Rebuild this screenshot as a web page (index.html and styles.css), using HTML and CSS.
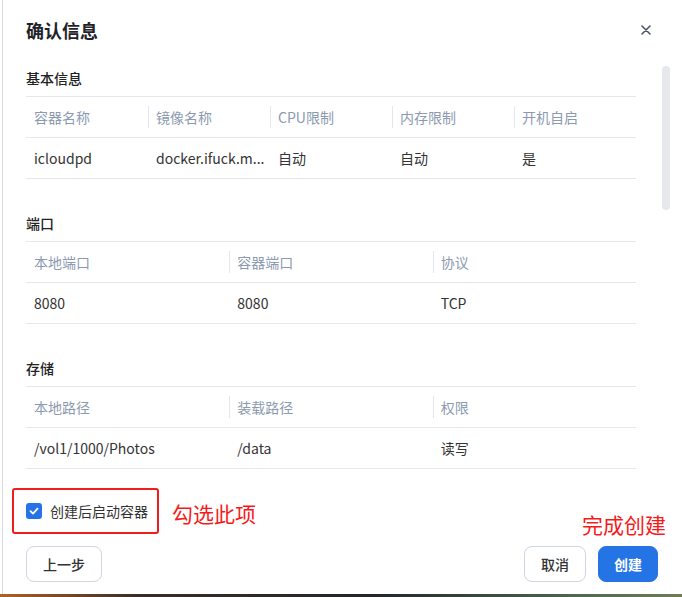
FILE: index.html
```html
<!DOCTYPE html>
<html lang="zh-CN">
<head>
    <meta charset="UTF-8">
    <meta name="viewport" content="width=device-width, initial-scale=1.0">
    <title>确认信息</title>
    <link rel="stylesheet" href="styles.css">
</head>
<body>
    <div class="dialog">
        <!-- Header -->
        <div class="dialog-header">
            <h2 class="dialog-title">确认信息</h2>
            <button class="close-btn" aria-label="关闭">
                <svg width="10" height="10" viewBox="0 0 10 10">
                    <path d="M1 1L9 9M9 1L1 9" stroke="#4b5568" stroke-width="1.6" stroke-linecap="round"/>
                </svg>
            </button>
        </div>

        <!-- Summary of the container settings -->
        <div class="dialog-body">
            <div class="scroll-thumb"></div>

            <section class="info-section">
                <h3 class="section-title">基本信息</h3>
                <table class="info-table">
                    <thead>
                        <tr>
                            <th>容器名称</th>
                            <th>镜像名称</th>
                            <th>CPU限制</th>
                            <th>内存限制</th>
                            <th>开机自启</th>
                        </tr>
                    </thead>
                    <tbody>
                        <tr>
                            <td>icloudpd</td>
                            <td>docker.ifuck.m...</td>
                            <td>自动</td>
                            <td>自动</td>
                            <td>是</td>
                        </tr>
                    </tbody>
                </table>
            </section>

            <section class="info-section">
                <h3 class="section-title">端口</h3>
                <table class="info-table">
                    <thead>
                        <tr>
                            <th>本地端口</th>
                            <th>容器端口</th>
                            <th>协议</th>
                        </tr>
                    </thead>
                    <tbody>
                        <tr>
                            <td>8080</td>
                            <td>8080</td>
                            <td>TCP</td>
                        </tr>
                    </tbody>
                </table>
            </section>

            <section class="info-section">
                <h3 class="section-title">存储</h3>
                <table class="info-table">
                    <thead>
                        <tr>
                            <th>本地路径</th>
                            <th>装载路径</th>
                            <th>权限</th>
                        </tr>
                    </thead>
                    <tbody>
                        <tr>
                            <td>/vol1/1000/Photos</td>
                            <td>/data</td>
                            <td>读写</td>
                        </tr>
                    </tbody>
                </table>
            </section>
        </div>

        <!-- Footer -->
        <div class="dialog-footer">
            <div class="footer-option">
                <label class="check-label mark-box">
                    <span class="checkbox">
                        <svg width="16" height="16" viewBox="0 0 16 16">
                            <path d="M4.5 8.2L7 10.6L11.5 5.6" fill="none" stroke="#ffffff" stroke-width="1.8" stroke-linecap="round" stroke-linejoin="round"/>
                        </svg>
                    </span>
                    创建后启动容器
                </label>
                <span class="note">勾选此项</span>
                <span class="note note-create">完成创建</span>
            </div>
            <div class="footer-actions">
                <button class="btn">上一步</button>
                <div class="actions-right">
                    <button class="btn">取消</button>
                    <button class="btn btn-primary">创建</button>
                </div>
            </div>
        </div>
    </div>
    <div class="desktop-edge"></div>
</body>
</html>
```

FILE: styles.css
```css
body {
    font-family: "Noto Sans CJK SC", "Noto Sans", sans-serif;
    margin: 0;
    padding: 0;
    background-color: #ffffff;
    color: #333333;
}

.dialog {
    margin-left: 2px;
    height: 594px;
    border-left: 1px solid #d9dbdf;
    background-color: #ffffff;
    display: flex;
    flex-direction: column;
    box-sizing: border-box;
}

/* Header */
.dialog-header {
    display: flex;
    align-items: center;
    justify-content: space-between;
    padding: 20px 28px 18px 23px;
}

.dialog-title {
    margin: 0;
    font-size: 18px;
    line-height: 20px;
    font-weight: 700;
    color: #1f2329;
}

.close-btn {
    width: 16px;
    height: 16px;
    padding: 0;
    border: none;
    background: transparent;
    display: flex;
    align-items: center;
    justify-content: center;
    cursor: pointer;
}

/* Body */
.dialog-body {
    position: relative;
    padding: 10px 46px 19px 23px;
}

.scroll-thumb {
    position: absolute;
    top: 8px;
    right: 12px;
    width: 8px;
    height: 144px;
    border-radius: 4px;
    background-color: #e6e8eb;
}

.info-section + .info-section {
    margin-top: 34px;
}

.section-title {
    margin: 0 0 8px 0;
    font-size: 14px;
    line-height: 20px;
    font-weight: 500;
    color: #222222;
}

.info-table {
    width: 100%;
    table-layout: fixed;
    border-collapse: separate;
    border-spacing: 0;
    border-top: 1px solid #e4e8ee;
}

.info-table th,
.info-table td {
    height: 40px;
    padding: 0 8px;
    border-bottom: 1px solid #e4e8ee;
    text-align: left;
    font-size: 14px;
    line-height: 20px;
    white-space: nowrap;
    overflow: hidden;
}

.info-table th {
    position: relative;
    font-weight: 400;
    color: #8c9ab0;
}

.info-table th + th::before {
    content: "";
    position: absolute;
    left: 0;
    top: 9px;
    bottom: 9px;
    width: 1px;
    background-color: #e4e8ee;
}

.info-table td {
    color: #333333;
}

/* Footer */
.dialog-footer {
    padding: 0 24px 12px 23px;
}

.footer-option {
    display: flex;
    align-items: center;
    height: 46px;
}

.check-label {
    display: inline-flex;
    align-items: center;
    gap: 8px;
    font-size: 14px;
    line-height: 20px;
    color: #333333;
    cursor: pointer;
}

/* Red annotation frame */
.mark-box {
    box-sizing: border-box;
    height: 46px;
    margin-left: -14px;
    padding: 0 9px 0 12px;
    border: 2px solid #f01d1d;
    border-radius: 3px;
}

.checkbox {
    width: 16px;
    height: 16px;
    border-radius: 3px;
    background-color: #2573e6;
    display: flex;
}

.note {
    margin-left: 13px;
    margin-top: 4px;
    font-size: 21px;
    line-height: 24px;
    color: #f61b1b;
}

.note-create {
    margin-left: auto;
    margin-right: -8px;
    margin-top: 0;
    align-self: flex-end;
    margin-bottom: -2px;
}

.footer-actions {
    display: flex;
    justify-content: space-between;
    margin-top: 12px;
}

.actions-right {
    display: flex;
    gap: 12px;
}

.btn {
    height: 36px;
    padding: 0 16px;
    font-family: inherit;
    font-size: 14px;
    font-weight: 500;
    color: #333333;
    background-color: #ffffff;
    border: 1px solid #cfd6e1;
    border-radius: 8px;
    cursor: pointer;
}

.btn-primary {
    padding: 0 15px;
    background-color: #2474e5;
    border-color: #2474e5;
    color: #ffffff;
    font-weight: 700;
}

.desktop-edge {
    height: 3px;
    background: linear-gradient(90deg, #b0602a 0%, #3a2c25 20%, #22262b 55%, #4d6a4f 85%, #6f7d55 100%);
}
```
